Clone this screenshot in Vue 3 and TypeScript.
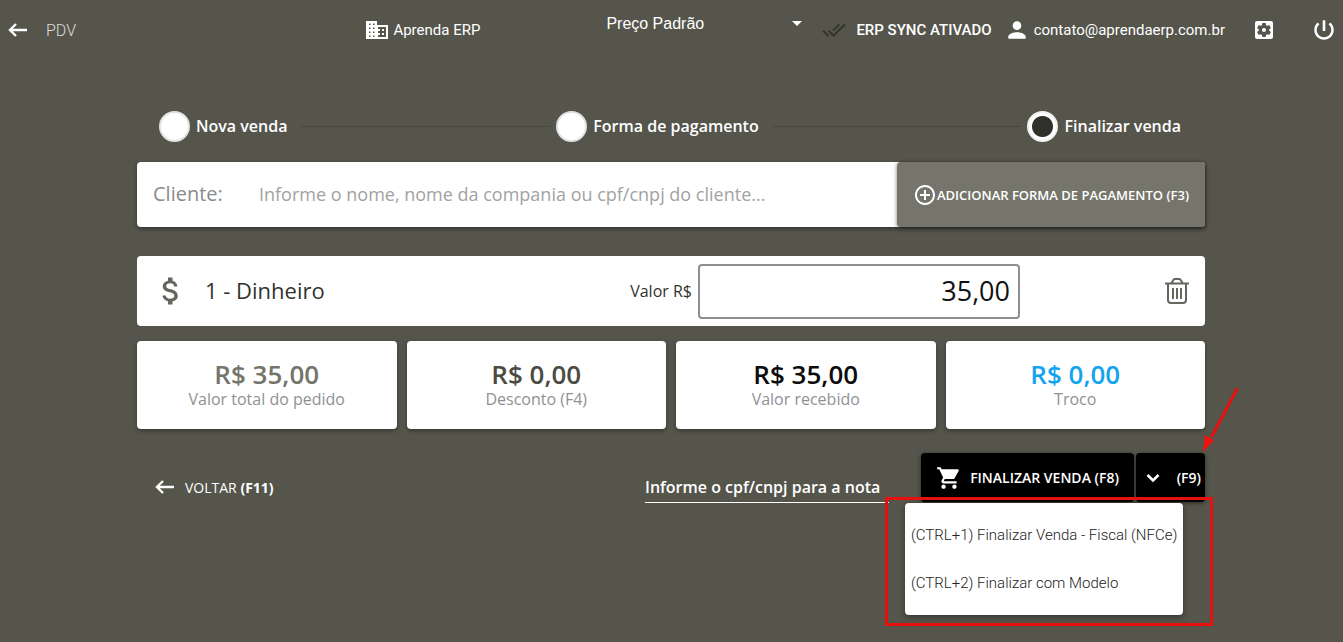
<script setup lang="ts">
import { ref } from 'vue'

interface Step {
  label: string
  active: boolean
}

interface Total {
  value: string
  label: string
  tone: string
}

const steps: Step[] = [
  { label: 'Nova venda', active: false },
  { label: 'Forma de pagamento', active: false },
  { label: 'Finalizar venda', active: true },
]

const totals: Total[] = [
  { value: 'R$ 35,00', label: 'Valor total do pedido', tone: 'olive' },
  { value: 'R$ 0,00', label: 'Desconto (F4)', tone: 'dark' },
  { value: 'R$ 35,00', label: 'Valor recebido', tone: 'black' },
  { value: 'R$ 0,00', label: 'Troco', tone: 'blue' },
]

const menuItems: string[] = [
  '(CTRL+1) Finalizar Venda - Fiscal (NFCe)',
  '(CTRL+2) Finalizar com Modelo',
]

const priceTable = ref('Preço Padrão')
const customer = ref('')
const amount = ref('35,00')
const taxId = ref('')
</script>

<template>
  <div class="page">
    <header class="topbar">
      <div class="brand">
        <button class="icon-button" type="button" aria-label="Voltar">
          <svg width="20" height="14" viewBox="0 0 20 14" fill="none" stroke="currentColor" stroke-width="2.400">
            <path d="M19 7H2M8 1L2 7l6 6" />
          </svg>
        </button>
        <span class="title">PDV</span>
      </div>
      <div class="company">
        <svg width="24" height="24" viewBox="0 0 24 24" fill="currentColor">
          <path d="M12 7V3H1v18h22V7H12zM5.500 19H4v-1.500h1.500V19zm0-4H4v-1.500h1.500V15zm0-4H4V9.500h1.500V11zm0-4H4V5.500h1.500V7zm4 12H8v-1.500h1.500V19zm0-4H8v-1.500h1.500V15zm0-4H8V9.500h1.500V11zm0-4H8V5.500h1.500V7zM21 19h-8v-2h2v-2h-2v-2h2v-2h-2V9h8v10zm-2-8h-2v2h2v-2zm0 4h-2v2h2v-2z" />
        </svg>
        <span>Aprenda ERP</span>
      </div>
      <div class="price">
        <select v-model="priceTable" aria-label="Tabela de preço">
          <option>Preço Padrão</option>
        </select>
        <svg class="caret" width="10" height="5" viewBox="0 0 10 5" fill="currentColor"><path d="M0 0h10L5 5z" /></svg>
      </div>
      <div class="sync">
        <svg width="24" height="24" viewBox="0 0 24 24" fill="currentColor">
          <path d="M18 7l-1.410-1.410-6.340 6.340 1.410 1.410L18 7zm4.240-1.410L11.660 16.170 7.480 12l-1.410 1.410L11.660 19l12-12-1.420-1.410zM.410 13.410L6 19l1.410-1.410L1.830 12 .410 13.410z" />
        </svg>
        <span>ERP SYNC ATIVADO</span>
      </div>
      <div class="user">
        <svg width="26" height="26" viewBox="0 0 24 24" fill="currentColor">
          <path d="M12 12c2.210 0 4-1.790 4-4s-1.790-4-4-4-4 1.790-4 4 1.790 4 4 4zm0 2c-2.670 0-8 1.340-8 4v2h16v-2c0-2.660-5.330-4-8-4z" />
        </svg>
        <span>contato@aprendaerp.com.br</span>
      </div>
      <button class="icon-button settings" type="button" aria-label="Configurações">
        <svg width="24" height="24" viewBox="0 0 24 24" fill="currentColor">
          <path d="M12 10c-1.100 0-2 .9-2 2s.9 2 2 2 2-.9 2-2-.9-2-2-2zm7-7H5c-1.110 0-2 .9-2 2v14c0 1.100.890 2 2 2h14c1.110 0 2-.9 2-2V5c0-1.100-.890-2-2-2zm-1.750 9c0 .230-.020.460-.050.680l1.480 1.160c.130.110.170.300.080.450l-1.400 2.420c-.090.150-.270.210-.430.150l-1.740-.7c-.360.280-.760.510-1.180.690l-.260 1.850c-.030.170-.180.300-.350.300h-2.800c-.170 0-.320-.130-.350-.290l-.260-1.850c-.430-.180-.820-.410-1.180-.690l-1.740.7c-.160.060-.340 0-.430-.150l-1.400-2.420c-.090-.150-.050-.340.080-.450l1.480-1.160c-.030-.230-.050-.460-.050-.690s.020-.460.050-.680l-1.480-1.160c-.130-.110-.170-.300-.080-.450l1.400-2.420c.090-.150.270-.210.430-.150l1.740.7c.360-.280.760-.510 1.180-.690l.260-1.850c.030-.170.180-.300.350-.300h2.800c.170 0 .320.130.350.290l.260 1.850c.430.180.820.410 1.180.690l1.740-.7c.160-.060.340 0 .430.150l1.400 2.420c.090.150.050.340-.080.450l-1.480 1.160c.030.230.050.460.050.690z" />
        </svg>
      </button>
      <button class="icon-button power" type="button" aria-label="Sair">
        <svg width="26" height="26" viewBox="0 0 24 24" fill="currentColor">
          <path d="M13.200 3h-2.400v10h2.400V3zm4.630 2.170l-1.600 1.600C17.800 8 18.700 9.900 18.700 12c0 3.700-3 6.700-6.700 6.700s-6.700-3-6.700-6.700c0-2.100.9-4 2.470-5.230L6.170 5.170C4.230 6.820 3 9.260 3 12c0 4.970 4.030 9 9 9s9-4.030 9-9c0-2.740-1.230-5.180-3.170-6.830z" />
        </svg>
      </button>
    </header>

    <main class="content">
      <ol class="steps">
        <li v-for="step in steps" :key="step.label" class="step">
          <span class="dot" :class="{ active: step.active }"></span>
          <span class="step-label">{{ step.label }}</span>
        </li>
      </ol>

      <div class="customer">
        <label for="customer">Cliente:</label>
        <input
          id="customer"
          v-model="customer"
          type="text"
          placeholder="Informe o nome, nome da compania ou cpf/cnpj do cliente..."
        />
        <button class="add-payment" type="button">
          <svg width="24" height="24" viewBox="0 0 24 24" fill="currentColor">
            <path d="M13 7h-2v4H7v2h4v4h2v-4h4v-2h-4V7zm-1-5C6.480 2 2 6.480 2 12s4.480 10 10 10 10-4.480 10-10S17.520 2 12 2zm0 18c-4.410 0-8-3.590-8-8s3.590-8 8-8 8 3.590 8 8-3.590 8-8 8z" />
          </svg>
          <span>ADICIONAR FORMA DE PAGAMENTO (F3)</span>
        </button>
      </div>

      <section class="payment">
        <svg class="money" width="36" height="36" viewBox="0 0 24 24" fill="currentColor">
          <path d="M11.800 10.900c-2.270-.590-3-1.200-3-2.150 0-1.090 1.010-1.850 2.700-1.850 1.780 0 2.440.850 2.500 2.100h2.210c-.070-1.720-1.120-3.300-3.210-3.810V3h-3v2.160c-1.940.420-3.500 1.680-3.500 3.610 0 2.310 1.910 3.460 4.700 4.130 2.500.6 3 1.480 3 2.410 0 .690-.490 1.790-2.700 1.790-2.060 0-2.870-.920-2.980-2.100h-2.200c.120 2.190 1.760 3.420 3.680 3.830V21h3v-2.150c1.950-.370 3.500-1.500 3.500-3.550 0-2.840-2.430-3.810-4.700-4.400z" />
        </svg>
        <span class="method">1 - Dinheiro</span>
        <label for="amount">Valor R$</label>
        <input id="amount" v-model="amount" type="text" />
        <button class="icon-button trash" type="button" aria-label="Remover pagamento">
          <svg width="24" height="26" viewBox="0 0 24 26" fill="none" stroke="currentColor" stroke-width="2">
            <path d="M0 5.500h24M3 5.500V22q0 3 3 3h12q3 0 3-3V5.500M6.500 5l2-3.200Q9 1 10 1h4q1 0 1.500.8l2 3.200" />
            <path d="M8 10v11M12 10v11M16 10v11" />
          </svg>
        </button>
      </section>

      <section class="totals">
        <div v-for="total in totals" :key="total.label" class="total">
          <strong :class="total.tone">{{ total.value }}</strong>
          <span>{{ total.label }}</span>
        </div>
      </section>

      <div class="actions">
        <button class="back" type="button">
          <svg width="20" height="14" viewBox="0 0 20 14" fill="none" stroke="currentColor" stroke-width="2.400">
            <path d="M19 7H2M8 1L2 7l6 6" />
          </svg>
          <span>VOLTAR <b>(F11)</b></span>
        </button>
        <input v-model="taxId" class="tax-id" type="text" aria-label="CPF/CNPJ para a nota" placeholder="Informe o cpf/cnpj para a nota" />
        <div class="finish">
          <button class="finish-main" type="button">
            <svg width="26" height="26" viewBox="0 0 24 24" fill="currentColor">
              <path d="M7 18c-1.100 0-1.990.9-1.990 2S5.900 22 7 22s2-.9 2-2-.9-2-2-2zM1 2v2h2l3.600 7.590-1.350 2.450c-.160.280-.250.610-.250.960 0 1.100.9 2 2 2h12v-2H7.420c-.140 0-.250-.110-.250-.250l.030-.120.9-1.630h7.450c.750 0 1.410-.410 1.750-1.030l3.580-6.490c.080-.140.120-.310.120-.480 0-.550-.450-1-1-1H5.210l-.940-2H1zm16 16c-1.100 0-1.990.9-1.990 2s.890 2 1.990 2 2-.9 2-2-.9-2-2-2z" />
            </svg>
            <span>FINALIZAR VENDA (F8)</span>
          </button>
          <button class="finish-more" type="button">
            <svg width="14" height="10" viewBox="0 0 14 10" fill="none" stroke="currentColor" stroke-width="2.600">
              <path d="M1.500 2L7 7.500 12.500 2" />
            </svg>
            <span>(F9)</span>
          </button>
          <div class="menu" role="menu">
            <button v-for="item in menuItems" :key="item" type="button" role="menuitem">{{ item }}</button>
          </div>
          <div class="highlight"></div>
          <svg class="pointer" width="38" height="68" viewBox="0 0 38 68">
            <path d="M35 3L10 50" fill="none" stroke="#e8100c" stroke-width="3" stroke-linecap="round" />
            <path d="M1 66L3 49l5 3 4 2z" fill="#f5100c" />
          </svg>
        </div>
      </div>
    </main>
  </div>
</template>

<style>
body {
  margin: 0;
  background: #55554c;
}
</style>

<style scoped>
.page {
  min-height: 100vh;
  box-sizing: border-box;
  overflow: hidden;
  background: #55554c;
  color: #fff;
  font-family: "Open Sans", "Noto Sans", sans-serif;
  font-size: 16px;
}

button,
input,
select {
  margin: 0;
  padding: 0;
  border: 0;
  background: none;
  color: inherit;
  font: inherit;
  outline: none;
}

svg {
  display: block;
  flex: none;
}

.topbar {
  display: flex;
  align-items: center;
  height: 60px;
  padding: 0 6px 0 8px;
  font-family: Roboto, "Open Sans", sans-serif;
  font-size: 15px;
}

.brand {
  display: flex;
  align-items: center;
  flex: 1;
  gap: 18px;
}

.title {
  color: #dededa;
  font-size: 16px;
  font-weight: 300;
}

.company,
.user {
  display: flex;
  align-items: center;
  gap: 4px;
}

.price {
  display: flex;
  align-items: center;
  width: 196px;
  margin: 0 20px 14px 126px;
  font-family: "Liberation Sans", Arial, sans-serif;
  font-size: 16px;
}

.price select {
  flex: 1;
  appearance: none;
}

.price option {
  color: #333;
}

.sync {
  display: flex;
  align-items: center;
  gap: 10px;
  margin-right: 12px;
  font-weight: 500;
}

.sync svg {
  color: #34342e;
}

.settings {
  margin: 0 35px 0 27px;
}

.content {
  padding: 51px 138px 0 137px;
}

.steps {
  display: flex;
  margin: 0;
  padding: 0 24px 0 22px;
  list-style: none;
  font-weight: 600;
}

.step {
  display: flex;
  align-items: center;
  flex: 1 1 auto;
  gap: 6px;
}

.step:last-child {
  flex: none;
}

.step:not(:last-child)::after {
  content: "";
  flex: 1;
  height: 1px;
  margin: 0 6px 0 8px;
  background: #484840;
}

.step-label {
  padding-bottom: 2px;
}

.dot {
  box-sizing: border-box;
  width: 31px;
  height: 31px;
  border: 2px solid #e2e2e0;
  border-radius: 50%;
  background: #fff;
}

.dot.active {
  border-color: #f0f0ee;
  background: radial-gradient(circle, #31312b 10px, #fff 11px);
}

.customer {
  display: flex;
  align-items: stretch;
  height: 65px;
  margin-top: 20px;
  border-radius: 4px;
  background: #fff;
  box-shadow: 0 2px 4px rgba(0, 0, 0, 0.4);
}

.customer label {
  align-self: center;
  width: 106px;
  padding: 0 0 2px 16px;
  box-sizing: border-box;
  color: #8b8b8b;
  font-size: 20px;
}

.customer input {
  flex: 1;
  min-width: 0;
  padding: 0 0 2px 16px;
  color: #333;
  font-size: 18px;
}

.customer input::placeholder {
  color: #a2a2a2;
  opacity: 1;
}

.add-payment {
  display: flex;
  align-items: center;
  justify-content: center;
  width: 308px;
  border-radius: 4px;
  background: #75756b;
  box-shadow: 0 1px 4px rgba(0, 0, 0, 0.5);
  font-size: 13px;
  font-weight: 600;
}

.payment {
  display: flex;
  align-items: center;
  height: 70px;
  margin-top: 29px;
  padding: 0 16px;
  border-radius: 4px;
  background: #fff;
  color: #33332e;
}

.money {
  color: #66665c;
}

.method {
  flex: 1;
  margin-left: 16px;
  padding-bottom: 2px;
  font-size: 22px;
}

.payment label {
  margin-right: 6px;
}

.payment input {
  box-sizing: border-box;
  width: 322px;
  height: 55px;
  margin-right: 145px;
  padding: 0 8px 2px;
  border: 2px solid #8e8e90;
  border-radius: 4px;
  color: #111;
  font-size: 27px;
  text-align: right;
}

.trash {
  color: #66665c;
}

.totals {
  display: grid;
  grid-template-columns: repeat(4, 1fr);
  gap: 10px;
  margin-top: 15px;
}

.total {
  display: flex;
  flex-direction: column;
  align-items: center;
  height: 88px;
  padding-top: 18px;
  box-sizing: border-box;
  border-radius: 4px;
  background: #fff;
  box-shadow: 0 2px 4px rgba(0, 0, 0, 0.35);
}

.total strong {
  font-size: 26px;
  font-weight: 600;
  line-height: 30px;
}

.total span {
  color: #919194;
  line-height: 20px;
}

.olive {
  color: #75756b;
}

.dark {
  color: #4b4b43;
}

.black {
  color: #0c0c0c;
}

.blue {
  color: #14a4ee;
}

.actions {
  display: flex;
  align-items: flex-start;
  margin-top: 24px;
}

.back {
  display: flex;
  align-items: center;
  gap: 10px;
  height: 48px;
  margin: 10px auto 0 18px;
  font-size: 14px;
}

.tax-id {
  width: 244px;
  height: 31px;
  margin: 18px 32px 0 0;
  border-bottom: 1px solid #fff;
}

.tax-id::placeholder {
  color: #fff;
  opacity: 1;
  font-weight: 600;
}

.finish {
  position: relative;
  display: flex;
  gap: 2px;
  font-size: 14px;
  font-weight: 600;
}

.finish-main,
.finish-more {
  display: flex;
  align-items: center;
  height: 49px;
  border-radius: 4px;
  background: #000;
  box-shadow: 0 1px 4px rgba(0, 0, 0, 0.5);
}

.finish-main {
  justify-content: center;
  gap: 8px;
  width: 213px;
}

.finish-more {
  justify-content: space-between;
  width: 69px;
  padding: 0 4px 0 10px;
}

.menu {
  position: absolute;
  top: 50px;
  right: 22px;
  display: flex;
  flex-direction: column;
  width: 278px;
  height: 112px;
  padding: 8px 0;
  box-sizing: border-box;
  border-radius: 4px;
  background: #fff;
  box-shadow: 0 2px 6px rgba(0, 0, 0, 0.4);
  color: #222;
  font-family: Roboto, "Open Sans", sans-serif;
  font-size: 15px;
  font-weight: 300;
}

.menu button {
  flex: 1;
  padding: 0 6px;
  text-align: left;
  white-space: nowrap;
}

.highlight {
  position: absolute;
  top: 44px;
  right: -8px;
  width: 328px;
  height: 129px;
  box-sizing: border-box;
  border: 3px solid #e8100c;
  pointer-events: none;
}

.pointer {
  position: absolute;
  top: -67px;
  right: -35px;
  pointer-events: none;
}
</style>
